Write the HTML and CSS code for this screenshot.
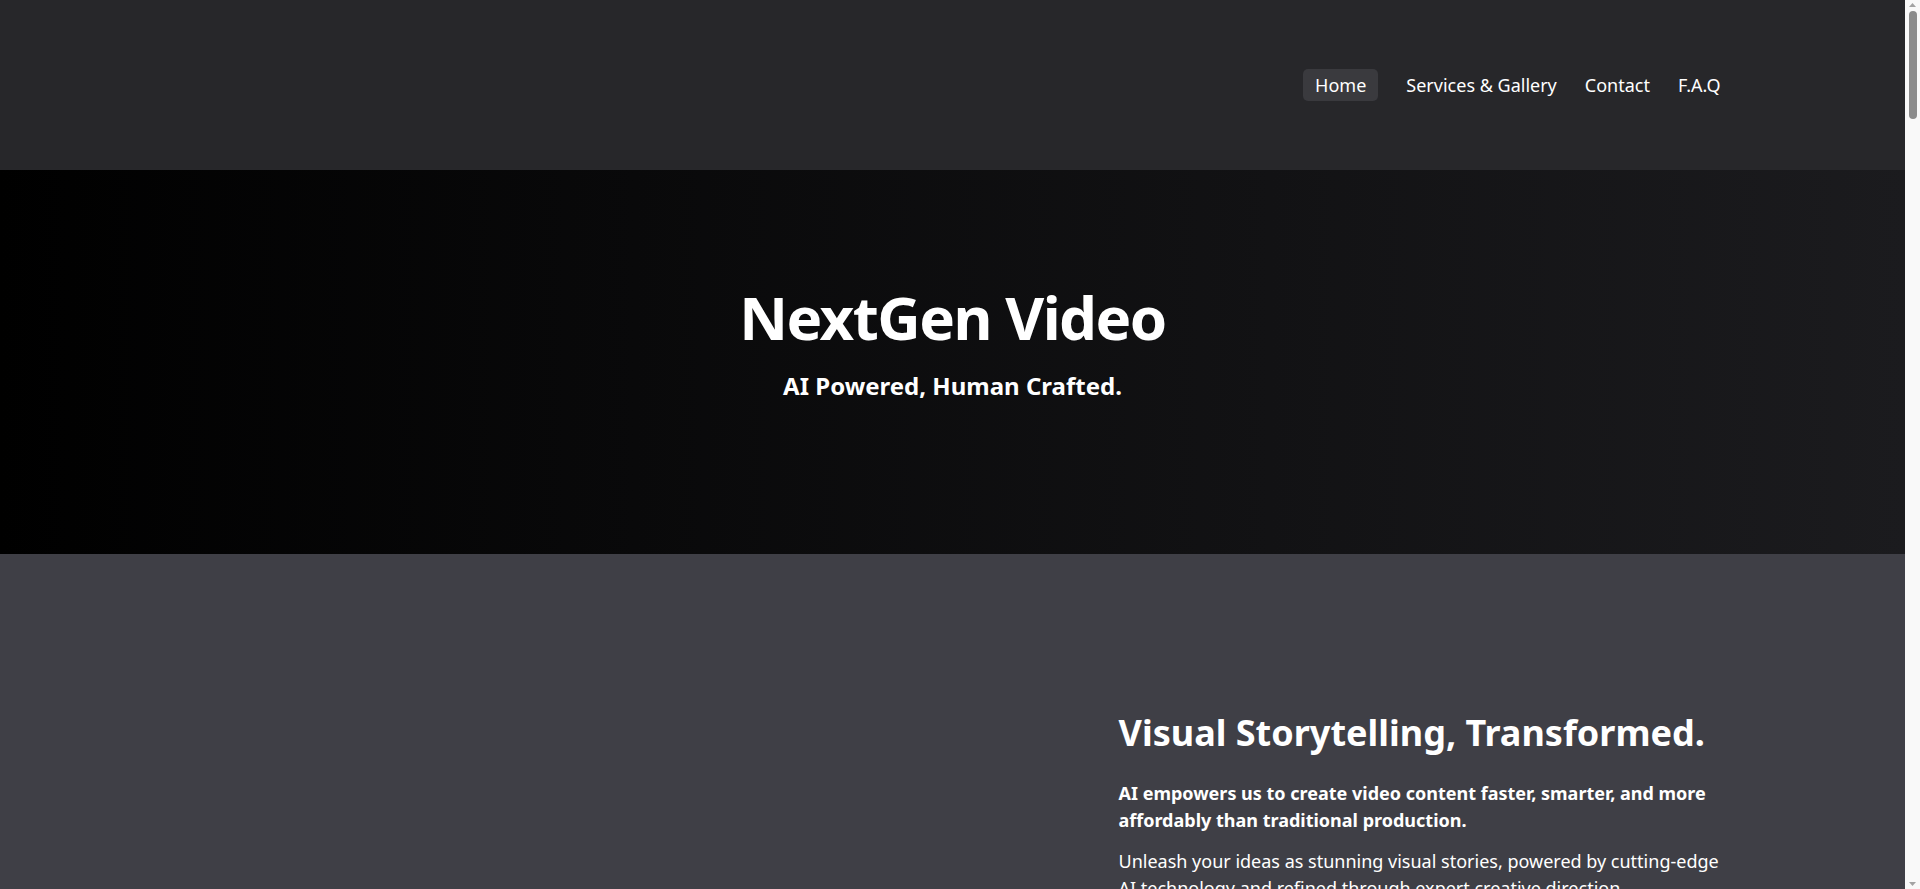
FILE: index.html
```html
<!DOCTYPE html>
<html lang="en">

<head>
    <meta charset="UTF-8">
    <meta name="viewport" content="width=device-width, initial-scale=1.0">
    <title>NextGen Video</title>
    <link rel="stylesheet" href="styles.css">
</head>

<body>
    <div class="page">
        <header class="topbar">
            <nav class="nav">
                <a class="nav-link active" href="#home">Home</a>
                <a class="nav-link" href="#services">Services &amp; Gallery</a>
                <a class="nav-link" href="#contact">Contact</a>
                <a class="nav-link" href="#faq">F.A.Q</a>
            </nav>
        </header>

        <section class="hero" id="home">
            <h1 class="hero-title">NextGen Video</h1>
            <p class="hero-sub">AI Powered, Human Crafted.</p>
        </section>

        <section class="intro">
            <div class="intro-inner">
                <div class="intro-media"></div>
                <div class="intro-text">
                    <h2 class="intro-title">Visual Storytelling, Transformed.</h2>
                    <p class="intro-lead">AI empowers us to create video content faster, smarter, and more affordably than traditional production.</p>
                    <p class="intro-body">Unleash your ideas as stunning visual stories, powered by cutting-edge AI technology and refined through expert creative direction.</p>
                </div>
            </div>
        </section>

        <section class="block" id="services">
            <h2 class="block-title">Services &amp; Gallery</h2>
        </section>
        <section class="block dark" id="contact">
            <h2 class="block-title">Contact</h2>
        </section>
        <section class="block" id="faq">
            <h2 class="block-title">F.A.Q</h2>
        </section>
    </div>

    <!-- scroll rail -->
    <div class="rail">
        <svg class="rail-arrow" width="15" height="10" viewBox="0 0 15 10"><path d="M4 7 L7.5 3 L11 7 Z" fill="#a3a3a3"/></svg>
        <div class="rail-thumb"></div>
        <div class="rail-track"></div>
        <svg class="rail-arrow" width="15" height="10" viewBox="0 0 15 10"><path d="M4 3 L7.5 7 L11 3 Z" fill="#a3a3a3"/></svg>
    </div>
</body>

</html>
```

FILE: styles.css
```css
* {
    padding: 0px;
    margin: 0px;
    box-sizing: border-box;
}
html,body{
    width: 100%;
    height: 100%;
    overflow: hidden;
}
body{
    font-family: "Noto Sans", "Open Sans", sans-serif;
    color: white;
    background-color: #3f3f46;
    display: flex;
}
.page{
    flex: 1;
    height: 100%;
    overflow-y: auto;
}

.rail{
    width: 15px;
    height: 100%;
    background-color: #f9f9f9;
    display: flex;
    flex-direction: column;
    align-items: center;
}
.rail-arrow{
    display: block;
    flex-shrink: 0;
}
.rail-thumb{
    width: 8px;
    height: 108px;
    margin-top: 1px;
    border-radius: 4px;
    background-color: #8c8c8c;
}
.rail-track{
    flex: 1;
}

.topbar{
    height: 170px;
    background-color: #27272a;
    display: flex;
    align-items: center;
}
.nav{
    width: 1536px;
    margin: 0px auto;
    display: flex;
    justify-content: flex-end;
    align-items: center;
    gap: 4px;
}
.nav-link{
    color: white;
    text-decoration: none;
    font-size: 18px;
    line-height: 20px;
    padding: 6px 12px;
    border-radius: 5px;
}
.nav-link:last-child{
    padding-right: 0px;
}
.nav-link.active{
    background-color: #3a3a3e;
    margin-right: 12px;
}

.hero{
    background: linear-gradient(to right, #000000, #1b1b1e);
    padding: 111px 0px 152px;
    text-align: center;
}
.hero-title{
    font-size: 60px;
    line-height: 72px;
    font-weight: 700;
    letter-spacing: -0.025em;
}
.hero-sub{
    margin-top: 17px;
    font-size: 24px;
    line-height: 32px;
    font-weight: 700;
}

.intro{
    padding: 157px 0px 160px;
}
.intro-inner{
    width: 1536px;
    margin: 0px auto;
    display: grid;
    grid-template-columns: 1fr 602px;
    column-gap: 48px;
}
.intro-title{
    font-size: 36px;
    line-height: 43px;
    font-weight: 700;
}
.intro-lead{
    margin-top: 26px;
    font-size: 18px;
    line-height: 27px;
    font-weight: 700;
}
.intro-body{
    margin-top: 14px;
    font-size: 18px;
    line-height: 27px;
}

.block{
    min-height: 2004px;
    padding: 120px 0px;
    background-color: #3f3f46;
}
.block.dark{
    background-color: #27272a;
}
.block-title{
    width: 1536px;
    margin: 0px auto;
    font-size: 36px;
    text-align: center;
}
```
